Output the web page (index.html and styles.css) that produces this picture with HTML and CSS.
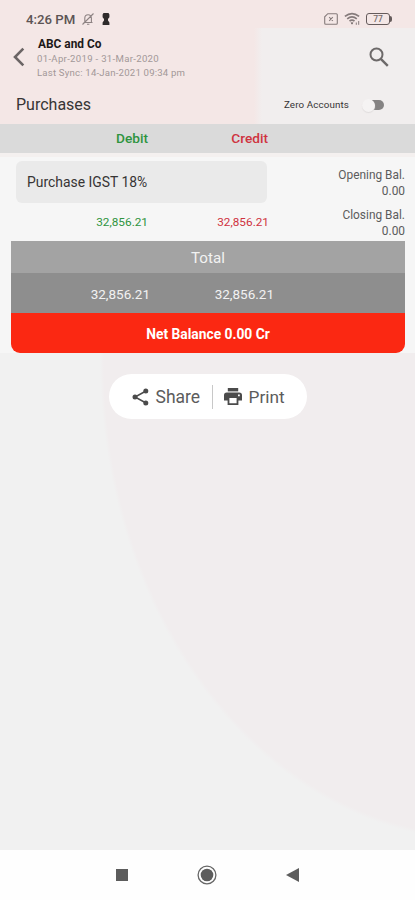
FILE: index.html
```html
<!DOCTYPE html>
<html lang="en">

<head>
    <meta charset="UTF-8">
    <meta name="viewport" content="width=device-width, initial-scale=1.0">
    <title>Purchases</title>
    <link rel="stylesheet" href="styles.css">
</head>

<body>
    <div class="top">
        <div class="status">
            <span class="time">4:26 PM</span>
            <svg class="bell" width="14" height="14" viewBox="0 0 14 14" fill="none" stroke="#8d8383" stroke-width="1.1">
                <path d="M2.5 10.5h9M3.8 10V6a3.3 3.3 0 0 1 6.6 0v4M6 12.2h2.4M1.5 12.5L12.5 1.5" />
            </svg>
            <svg class="key" width="8" height="14" viewBox="0 0 8 14" fill="#2f2b2b">
                <path d="M1.5 1h5l.9 1.6v2.6L6 7v1.4l1.4 2V13H.6v-2.6l1.4-2V7L.6 5.2V2.6z" />
            </svg>
            <svg class="sim" width="14" height="12" viewBox="0 0 14 12" fill="none" stroke="#857b7b" stroke-width="1.1">
                <path d="M3.8.7h8.5q1 0 1 1v8.6q0 1-1 1H1.7q-1 0-1-1V3.8zM5.2 4.2l3.6 3.6M8.8 4.2L5.2 7.8" />
            </svg>
            <svg class="wifi" width="17" height="14" viewBox="0 0 17 14" fill="none" stroke="#857b7b" stroke-width="1.7">
                <path d="M.9 4.3q7.1-5.5 14.2 0M3.2 6.8q4.8-3.7 9.6 0M5.5 9.2q2.5-2 5 0" />
                <path d="M7 10.8h2l-1 1.4zM12.3 10.5v2.3M14.7 9v3.8" stroke-width="1" />
            </svg>
            <div class="battery">77</div>
        </div>
        <div class="header">
            <svg class="back" width="12" height="20" viewBox="0 0 12 20" fill="none" stroke="#6b6565" stroke-width="2.6">
                <path d="M10.3 1.6L2 10l8.3 8.4" />
            </svg>
            <div class="company">
                <h1>ABC and Co</h1>
                <p class="period">01-Apr-2019 - 31-Mar-2020</p>
                <p class="sync">Last Sync: 14-Jan-2021 09:34 pm</p>
            </div>
            <svg class="search" width="20" height="20" viewBox="0 0 20 20" fill="none" stroke="#6d6969" stroke-width="2">
                <circle cx="7.5" cy="7.5" r="6" />
                <path d="M11.8 11.8l7 7" stroke-width="2.4" />
            </svg>
        </div>
        <div class="title">
            <h2>Purchases</h2>
            <span class="zero">Zero Accounts</span>
            <div class="switch"><i></i></div>
        </div>
    </div>
    <div class="columns">
        <span class="debit">Debit</span>
        <span class="credit">Credit</span>
    </div>
    <div class="ledger">
        <div class="entry">
            <div class="left">
                <div class="name">Purchase IGST 18%</div>
                <div class="amount">
                    <span class="debit">32,856.21</span>
                    <span class="credit">32,856.21</span>
                </div>
            </div>
            <div class="balance">
                <p>Opening Bal.<br>0.00</p>
                <p>Closing Bal.<br>0.00</p>
            </div>
        </div>
        <div class="summary">
            <div class="total">Total</div>
            <div class="sums">
                <span>32,856.21</span>
                <span>32,856.21</span>
            </div>
            <div class="net">Net Balance 0.00 Cr</div>
        </div>
    </div>
    <div class="content">
        <div class="actions">
            <svg class="share-icon" width="17" height="18" viewBox="0 0 17 18" fill="#4b4b4b">
                <path d="M14 3L3 9l11 6" fill="none" stroke="#4b4b4b" stroke-width="1.5" />
                <circle cx="13.8" cy="3" r="2.5" />
                <circle cx="3" cy="9" r="2.5" />
                <circle cx="13.8" cy="15" r="2.5" />
            </svg>
            <span class="share">Share</span>
            <i class="line"></i>
            <svg class="print-icon" width="18" height="17" viewBox="0 0 18 17" fill="#4b4b4b">
                <path d="M3.8 0h10.4v3.4H3.8z" />
                <path d="M2.8 4.4h12.4A2.8 2.8 0 0 1 18 7.2v5.4h-3.6V17H3.6v-4.4H0V7.2a2.8 2.8 0 0 1 2.8-2.8zM5.4 10v5.2h7.2V10zM14 6.4v1.8h1.8V6.4z" fill-rule="evenodd" />
            </svg>
            <span class="print">Print</span>
        </div>
    </div>
    <div class="nav">
        <svg width="12" height="12" viewBox="0 0 12 12">
            <rect width="12" height="12" fill="#5c5c5c" />
        </svg>
        <svg width="20" height="20" viewBox="0 0 20 20">
            <circle cx="10" cy="10" r="8.9" fill="none" stroke="#666" stroke-width="1.3" />
            <circle cx="10" cy="10" r="6.3" fill="#5c5c5c" />
        </svg>
        <svg width="13" height="14" viewBox="0 0 13 14">
            <path d="M13 0v14L0 7z" fill="#5c5c5c" />
        </svg>
    </div>
</body>

</html>
```
FILE: styles.css
```css
* {
    margin: 0;
    padding: 0;
    box-sizing: border-box;
}

body {
    display: flex;
    flex-direction: column;
    height: 900px;
    font-family: Roboto, "Liberation Sans", sans-serif;
    color: #373535;
    background-color: #f4f0ef;
    overflow: hidden;
}

svg {
    display: block;
    flex: none;
}

span,
p,
h1,
h2 {
    white-space: nowrap;
}

.top {
    height: 124px;
    background: linear-gradient(to right, #f4e7e6, #f1eeee 8px) 254px 28px no-repeat, #f4e7e6;
}

.status {
    display: flex;
    align-items: center;
    height: 38px;
    padding: 0 25px 0 26px;
}

.time {
    width: 55px;
    font-size: 13.2px;
    font-weight: 500;
    color: #5c5454;
}

.key {
    margin-left: 7px;
}

.sim {
    margin-left: auto;
}

.wifi {
    margin: 0 5px 0 6px;
}

.battery {
    position: relative;
    width: 24px;
    height: 12px;
    border: 1.5px solid #655b5b;
    border-radius: 3px;
    font-size: 8.5px;
    font-weight: 500;
    line-height: 10px;
    text-align: center;
    color: #766c6c;
}

.battery::after {
    content: "";
    position: absolute;
    right: -3px;
    top: 2px;
    width: 2px;
    height: 6px;
    border-radius: 0 2px 2px 0;
    background-color: #655b5b;
}

.header {
    display: flex;
    height: 47px;
    padding: 0 26px 0 13px;
}

.back {
    margin-top: 9px;
}

.company {
    flex: 1;
    margin-left: 12px;
    font-size: 9.6px;
    line-height: 14px;
    color: #a29898;
}

.company h1 {
    padding-left: 1px;
    font-size: 11.9px;
    font-weight: 700;
    line-height: 13px;
    color: #1d1919;
}

.period {
    padding-top: 1px;
    line-height: 13px;
    letter-spacing: 0.3px;
}

.sync {
    line-height: 15px;
    letter-spacing: 0.2px;
}

.search {
    margin-top: 9px;
}

.title {
    display: flex;
    align-items: center;
    height: 39px;
    padding: 0 31px 0 16px;
}

.title h2 {
    flex: 1;
    font-size: 16px;
    font-weight: 400;
}

.zero {
    font-size: 9.8px;
    letter-spacing: 0.12px;
}

.switch {
    display: flex;
    width: 22px;
    height: 10px;
    margin-left: 13px;
    border-radius: 5px;
    background: linear-gradient(to right, transparent 8px, #858383 8px);
}

.switch i {
    width: 13px;
    height: 13px;
    margin-top: -1px;
    border-radius: 50%;
    background-color: #f5f3f3;
    box-shadow: 0 1px 1px #dfdcdc;
}

.columns {
    display: grid;
    grid-template-columns: 148px 120px;
    height: 29px;
    font-size: 13.7px;
    font-weight: 500;
    line-height: 29px;
    text-align: right;
    background-color: #dadada;
}

.debit {
    color: #2f9440;
}

.credit {
    color: #cf3340;
}

.ledger {
    height: 196px;
    margin-top: 4px;
    background-color: #f6f6f6;
}

.entry {
    display: flex;
    justify-content: space-between;
    height: 84px;
    padding: 4px 10px 0 16px;
}

.left {
    width: 251px;
}

.name {
    height: 42px;
    padding-left: 11px;
    border-radius: 6px;
    font-size: 13.9px;
    line-height: 43px;
    background-color: #eaeaea;
}

.amount {
    display: grid;
    grid-template-columns: 132px 121px;
    margin-top: 11px;
    font-size: 11.8px;
    line-height: 17px;
    text-align: right;
}

.balance {
    padding-top: 6px;
    font-size: 11.9px;
    line-height: 16px;
    text-align: right;
    color: #5c5c5c;
}

.balance p {
    margin-bottom: 8px;
}

.summary {
    margin: 0 10px 0 11px;
    border-radius: 0 0 9px 9px;
    color: #f2f2f2;
    overflow: hidden;
}

.total {
    height: 32px;
    font-size: 15.2px;
    line-height: 34px;
    text-align: center;
    background-color: #a3a3a3;
}

.sums {
    display: grid;
    grid-template-columns: 139px 124px;
    height: 40px;
    font-size: 13.5px;
    line-height: 42px;
    text-align: right;
    background-color: #8e8e8e;
}

.net {
    height: 40px;
    font-size: 13.8px;
    font-weight: 700;
    line-height: 42px;
    text-align: center;
    color: #fff;
    background-color: #fb2812;
}

/* large pale disc behind the buttons */
.content {
    flex: 1;
    padding-top: 21px;
    background: radial-gradient(380px 480px at 480px 7px, #f1edee 99%, #f1f1f1 100%);
}

.actions {
    display: flex;
    align-items: center;
    width: 198px;
    height: 45px;
    margin: 0 auto;
    padding-left: 23px;
    border-radius: 23px;
    font-size: 17px;
    color: #5c5c5c;
    background-color: #fff;
}

.share {
    width: 45px;
    margin: 0 11px 0 7px;
    font-size: 17.5px;
}

.line {
    width: 1px;
    height: 24px;
    margin-right: 11px;
    background-color: #c8c8c8;
}

.print {
    margin-left: 7px;
    font-size: 17.3px;
}

.nav {
    display: flex;
    justify-content: space-between;
    align-items: center;
    height: 50px;
    padding: 0 116px;
    background-color: #fefefe;
}
```
